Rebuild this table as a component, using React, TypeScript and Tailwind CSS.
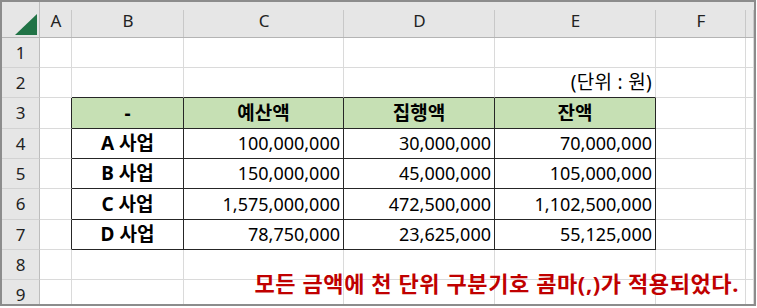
import React from 'react';

const FONT = { fontFamily: '"Noto Sans", "Noto Sans CJK KR", sans-serif' };

const COLS = ['A', 'B', 'C', 'D', 'E', 'F', ''];
const ROW_H = ['h-[30px]', 'h-[30px]', 'h-[31px]', 'h-[30px]', 'h-[30px]', 'h-[31px]', 'h-[30px]', 'h-[30px]', 'h-[30px]'];

type Cell = { text: string; kind: 'head' | 'label' | 'num' | 'note' };

const DATA: Record<number, Record<number, Cell>> = {
  2: { 5: { text: '(단위 : 원)', kind: 'note' } },
  3: {
    2: { text: '-', kind: 'head' },
    3: { text: '예산액', kind: 'head' },
    4: { text: '집행액', kind: 'head' },
    5: { text: '잔액', kind: 'head' },
  },
  4: {
    2: { text: 'A 사업', kind: 'label' },
    3: { text: '100,000,000', kind: 'num' },
    4: { text: '30,000,000', kind: 'num' },
    5: { text: '70,000,000', kind: 'num' },
  },
  5: {
    2: { text: 'B 사업', kind: 'label' },
    3: { text: '150,000,000', kind: 'num' },
    4: { text: '45,000,000', kind: 'num' },
    5: { text: '105,000,000', kind: 'num' },
  },
  6: {
    2: { text: 'C 사업', kind: 'label' },
    3: { text: '1,575,000,000', kind: 'num' },
    4: { text: '472,500,000', kind: 'num' },
    5: { text: '1,102,500,000', kind: 'num' },
  },
  7: {
    2: { text: 'D 사업', kind: 'label' },
    3: { text: '78,750,000', kind: 'num' },
    4: { text: '23,625,000', kind: 'num' },
    5: { text: '55,125,000', kind: 'num' },
  },
};

function SheetCell({ r, c }: { r: number; c: number }) {
  const inTable = r >= 3 && r <= 7 && c >= 2 && c <= 5;
  const darkRight = inTable || (c === 1 && r >= 3 && r <= 7);
  const darkBottom = inTable || (r === 2 && c >= 2 && c <= 5);
  const cell = DATA[r]?.[c];

  let align = 'justify-start';
  let text = 'font-normal text-[18px]';
  if (cell?.kind === 'head' || cell?.kind === 'label') {
    align = 'justify-center';
    text = 'font-bold text-[19px]';
  } else if (cell?.kind === 'note') {
    align = 'justify-end pr-[3px]';
    text = 'font-normal text-[19px] tracking-[0.3px]';
  } else if (cell) {
    align = 'justify-end pr-[3px]';
  }

  return (
    <div
      className={`flex items-center overflow-hidden whitespace-nowrap border-r border-b text-black ${ROW_H[r - 1]} ${align} ${text} ${
        darkRight ? 'border-r-[#262626]' : 'border-r-[#dadada]'
      } ${darkBottom ? 'border-b-[#262626]' : 'border-b-[#dadada]'} ${
        r === 3 && inTable ? 'bg-[#c6e0b4]' : 'bg-white'
      }`}
    >
      {cell?.text}
    </div>
  );
}

export default function App() {
  const rows = [1, 2, 3, 4, 5, 6, 7, 8, 9];
  return (
    <div className="h-[308px] w-[757px] bg-white" style={FONT}>
      <div className="relative h-[306px] w-[756px] overflow-hidden border-2 border-[#8c8c8c]">
        <div className="grid grid-cols-[38px_32px_112px_160px_151px_161px_90px_8px]">
          {/* corner */}
          <div className="relative h-[36px] border-r border-b border-r-[#bdbdbd] border-b-[#b4b4b4] bg-[#e6e6e6]">
            <svg className="absolute left-0 top-0" width="38" height="36" viewBox="0 0 38 36">
              <polygon points="35,12 35,33 13,33" fill="#217346" />
            </svg>
          </div>
          {COLS.map((c, i) => (
            <div
              key={`h${i}`}
              className="relative flex h-[36px] items-center justify-center border-b border-b-[#b4b4b4] bg-[#e6e6e6] pt-[2px] text-[17px] text-[#222] after:absolute after:bottom-0 after:right-0 after:top-[8px] after:w-px after:bg-[#c8c8c8]"
            >
              {c}
            </div>
          ))}
          {rows.map((r) => (
            <React.Fragment key={r}>
              <div
                className={`flex items-center justify-center border-r border-b border-r-[#bdbdbd] border-b-[#d2d2d2] bg-[#e6e6e6] text-[17px] text-[#222] ${ROW_H[r - 1]}`}
              >
                {r}
              </div>
              {COLS.map((_, i) => (
                <SheetCell key={`${r}-${i}`} r={r} c={i + 1} />
              ))}
            </React.Fragment>
          ))}
        </div>
        <div className="absolute right-[15px] top-[265px] whitespace-nowrap text-[22px] font-bold tracking-[0.6px] text-[#c00000]">
          모든 금액에 천 단위 구분기호 콤마(,)가 적용되었다.
        </div>
      </div>
    </div>
  );
}
